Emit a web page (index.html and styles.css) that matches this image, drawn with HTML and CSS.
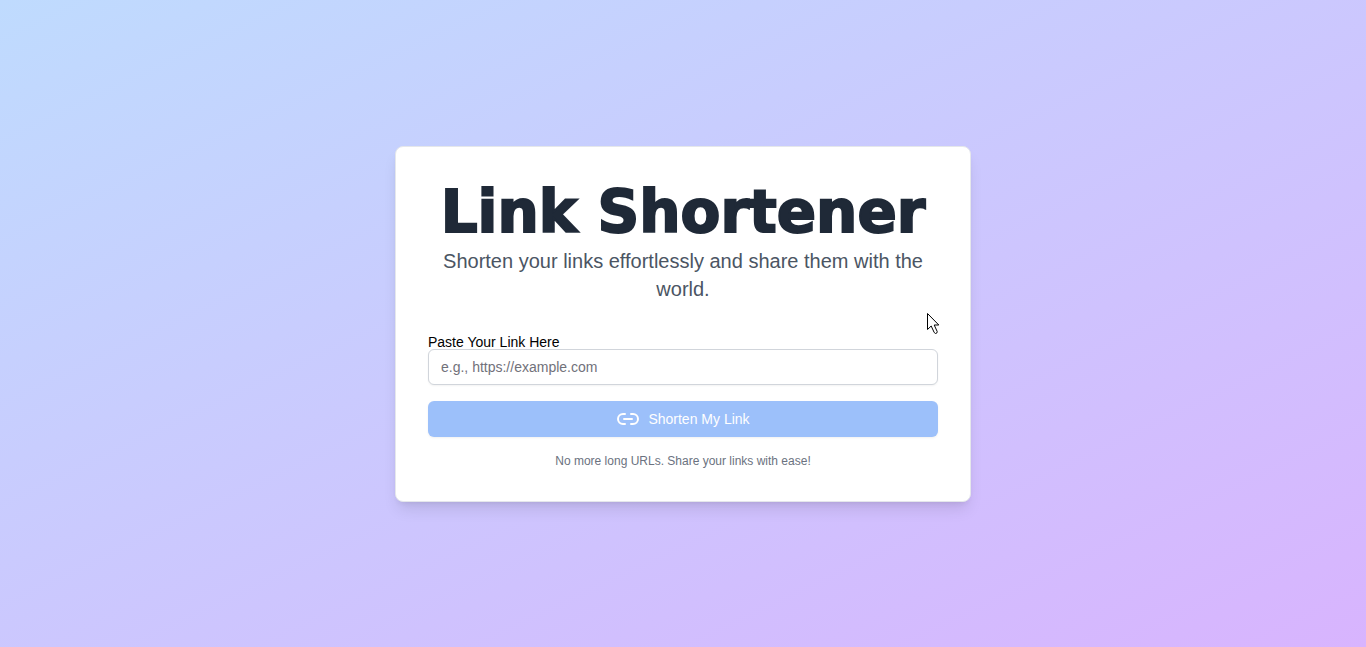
FILE: index.html
```html
<!DOCTYPE html>
<html lang="en">
<head>
<meta charset="utf-8">
<meta name="viewport" content="width=device-width, initial-scale=1">
<title>Link Shortener</title>
<link rel="stylesheet" href="styles.css">
</head>
<body>
<main class="page">
  <section class="card">
    <header class="intro">
      <h1 class="title">Link Shortener</h1>
      <p class="subtitle">Shorten your links effortlessly and share them with the world.</p>
    </header>
    <form class="form">
      <div class="field">
        <label class="label" for="link">Paste Your Link Here</label>
        <input class="input" id="link" type="url" placeholder="e.g., https://example.com">
      </div>
      <button class="submit" type="submit" disabled>
        <svg class="icon" viewBox="0 0 24 24" fill="none" stroke="currentColor" stroke-width="2" stroke-linecap="round" stroke-linejoin="round" aria-hidden="true">
          <path d="M9 17H7A5 5 0 0 1 7 7h2"/>
          <path d="M15 7h2a5 5 0 1 1 0 10h-2"/>
          <path d="M8 12h8"/>
        </svg>
        <span>Shorten My Link</span>
      </button>
    </form>
    <p class="note">No more long URLs. Share your links with ease!</p>
  </section>
  <svg class="cursor" viewBox="0 0 12 21" aria-hidden="true">
    <path d="M.5.5v16l3.7-3.5 3 6.5 1.3 1 1.5-.7.2-1.3-3-6.5h4.6z" fill="#fff" stroke="#000"/>
  </svg>
</main>
</body>
</html>
```
FILE: styles.css
```css
* {
  box-sizing: border-box;
  margin: 0;
}

body {
  font-family: "Liberation Sans", Arial, sans-serif;
  color: #000;
}

.page {
  position: relative;
  display: flex;
  align-items: center;
  justify-content: center;
  min-height: 100vh;
  background: linear-gradient(to bottom right, #bfdbfe, #d8b4fe);
}

.card {
  width: 100%;
  max-width: 576px;
  padding: 32px;
  border: 1px solid #e5e7eb;
  border-radius: 8px;
  background: #fff;
  box-shadow: 0 10px 15px -3px rgb(0 0 0 / 10%), 0 4px 6px -4px rgb(0 0 0 / 10%);
}

.intro {
  margin-bottom: 32px;
  text-align: center;
}

.title {
  font-family: "Arial Black", "DejaVu Sans", sans-serif;
  font-size: 58px;
  font-weight: 900;
  line-height: 66px;
  color: #1f2937;
  -webkit-text-stroke: 2px #1f2937;
}

.subtitle {
  margin-top: 2px;
  font-size: 20px;
  line-height: 28px;
  color: #4b5563;
}

.form {
  display: grid;
  gap: 16px;
}

.field {
  display: grid;
}

.label {
  font-size: 14px;
  line-height: 14px;
}

.input {
  width: 100%;
  height: 36px;
  padding: 4px 12px;
  border: 1px solid #d1d5db;
  border-radius: 6px;
  background: #fff;
  box-shadow: 0 1px 2px rgb(0 0 0 / 5%);
  font: 14px/20px "Liberation Sans", Arial, sans-serif;
}

.input::placeholder {
  color: #71717a;
}

.submit {
  display: flex;
  align-items: center;
  justify-content: center;
  gap: 8px;
  height: 36px;
  border: 0;
  border-radius: 6px;
  background: #3b82f6;
  box-shadow: 0 1px 2px rgb(0 0 0 / 10%);
  color: #fff;
  font: 500 14px/20px "Liberation Sans", Arial, sans-serif;
  opacity: 0.5;
}

.icon {
  width: 24px;
  height: 24px;
}

.note {
  margin-top: 16px;
  font-size: 12px;
  line-height: 16px;
  text-align: center;
  color: #6b7280;
}

.cursor {
  position: absolute;
  top: 313px;
  left: calc(50% + 244px);
  width: 12px;
  height: 21px;
  pointer-events: none;
}
```
